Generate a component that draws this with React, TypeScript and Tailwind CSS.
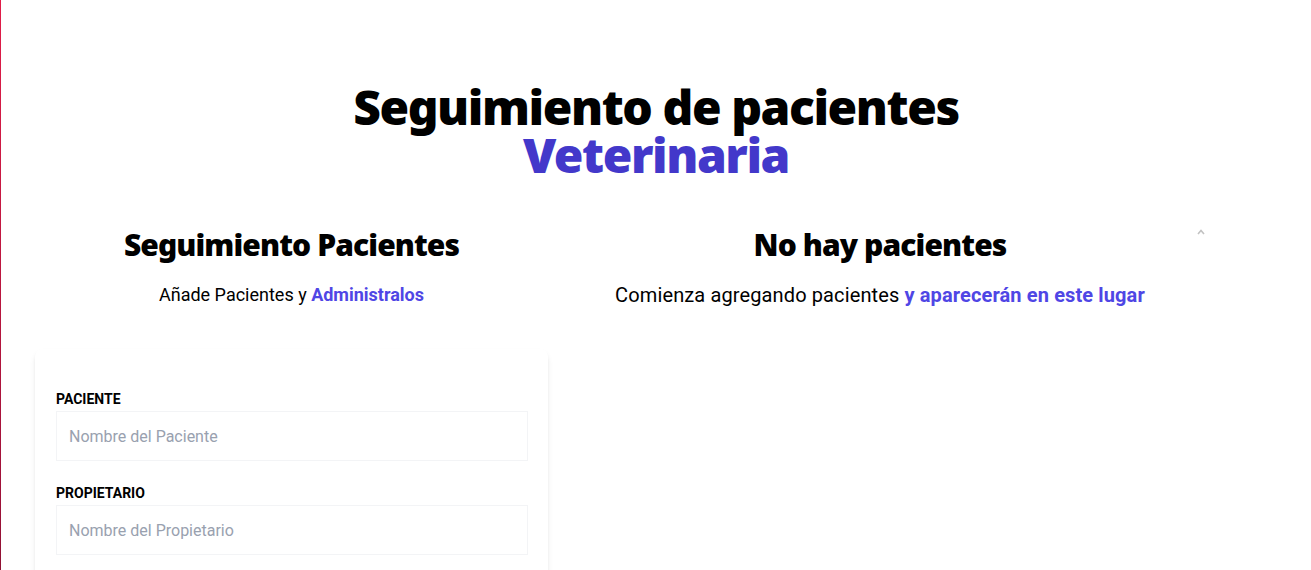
const heading = "font-['Noto_Sans',sans-serif] font-black tracking-[-0.03em] text-black";

const campos = [
  { id: "mascota", label: "Paciente", placeholder: "Nombre del Paciente", type: "text" },
  { id: "propietario", label: "Propietario", placeholder: "Nombre del Propietario", type: "text" },
  { id: "email", label: "Email", placeholder: "Email Contacto Propietario", type: "email" },
  { id: "alta", label: "Alta", placeholder: "", type: "date" },
];

function Header() {
  return (
    <h1 className={`${heading} text-5xl leading-none text-center`}>
      Seguimiento de pacientes
      <br />
      <span className="text-[#4338ca]">Veterinaria</span>
    </h1>
  );
}

function Formulario() {
  return (
    <div className="ml-[34px] w-[513px] shrink-0">
      <h2 className={`${heading} text-3xl text-center`}>Seguimiento Pacientes</h2>
      <p className="mt-[18px] mb-10 text-center text-lg text-black">
        Añade Pacientes y <span className="font-bold text-[#4f46e5]">Administralos</span>
      </p>
      <form className="mt-[4px] rounded-lg bg-white pl-[21px] pr-5 py-10 shadow-md">
        {campos.map((c) => (
          <div key={c.id} className="mb-[22px]">
            <label htmlFor={c.id} className="block text-sm font-bold uppercase text-black">
              {c.label}
            </label>
            <input
              id={c.id}
              type={c.type}
              placeholder={c.placeholder}
              className="mt-0.5 block h-[50px] w-full border border-gray-100 px-3 text-base text-gray-700 placeholder-gray-400 outline-none"
            />
          </div>
        ))}
        <div className="mb-[22px]">
          <label htmlFor="sintomas" className="block text-sm font-bold uppercase text-black">
            Síntomas
          </label>
          <textarea
            id="sintomas"
            placeholder="Describe los Síntomas"
            className="mt-0.5 block h-24 w-full border border-gray-100 p-3 text-base placeholder-gray-400 outline-none"
          />
        </div>
        <input
          type="submit"
          value="Agregar Paciente"
          className="w-full cursor-pointer bg-[#4f46e5] p-3 font-bold uppercase text-white"
        />
      </form>
    </div>
  );
}

function ListadoPacientes() {
  return (
    <div className="ml-5 flex w-[641px] shrink-0">
      <div className="w-[624px]">
        <h2 className={`${heading} text-3xl text-center`}>No hay pacientes</h2>
        <p className="mt-[18px] mb-10 text-center text-xl tracking-[0.006em] text-black">
          Comienza agregando pacientes{" "}
          <span className="font-bold text-[#4f46e5]">y aparecerán en este lugar</span>
        </p>
      </div>
      <div className="flex w-[17px] justify-center pt-[2px]">
        <svg width="8" height="6" viewBox="0 0 8 6" fill="none">
          <polyline points="1,5 4,1.5 7,5" stroke="#c2c2c2" strokeWidth="1.6" />
        </svg>
      </div>
    </div>
  );
}

export default function App() {
  return (
    <div className="flex min-h-screen bg-white font-['Roboto',sans-serif]">
      <div className="w-px shrink-0 bg-gradient-to-b from-[#e11d48] via-[#9f1239] to-[#3b0a16]" />
      <div className="flex-1 pt-[83px]">
        <Header />
        <div className="mt-12 flex">
          <Formulario />
          <ListadoPacientes />
        </div>
      </div>
    </div>
  );
}
